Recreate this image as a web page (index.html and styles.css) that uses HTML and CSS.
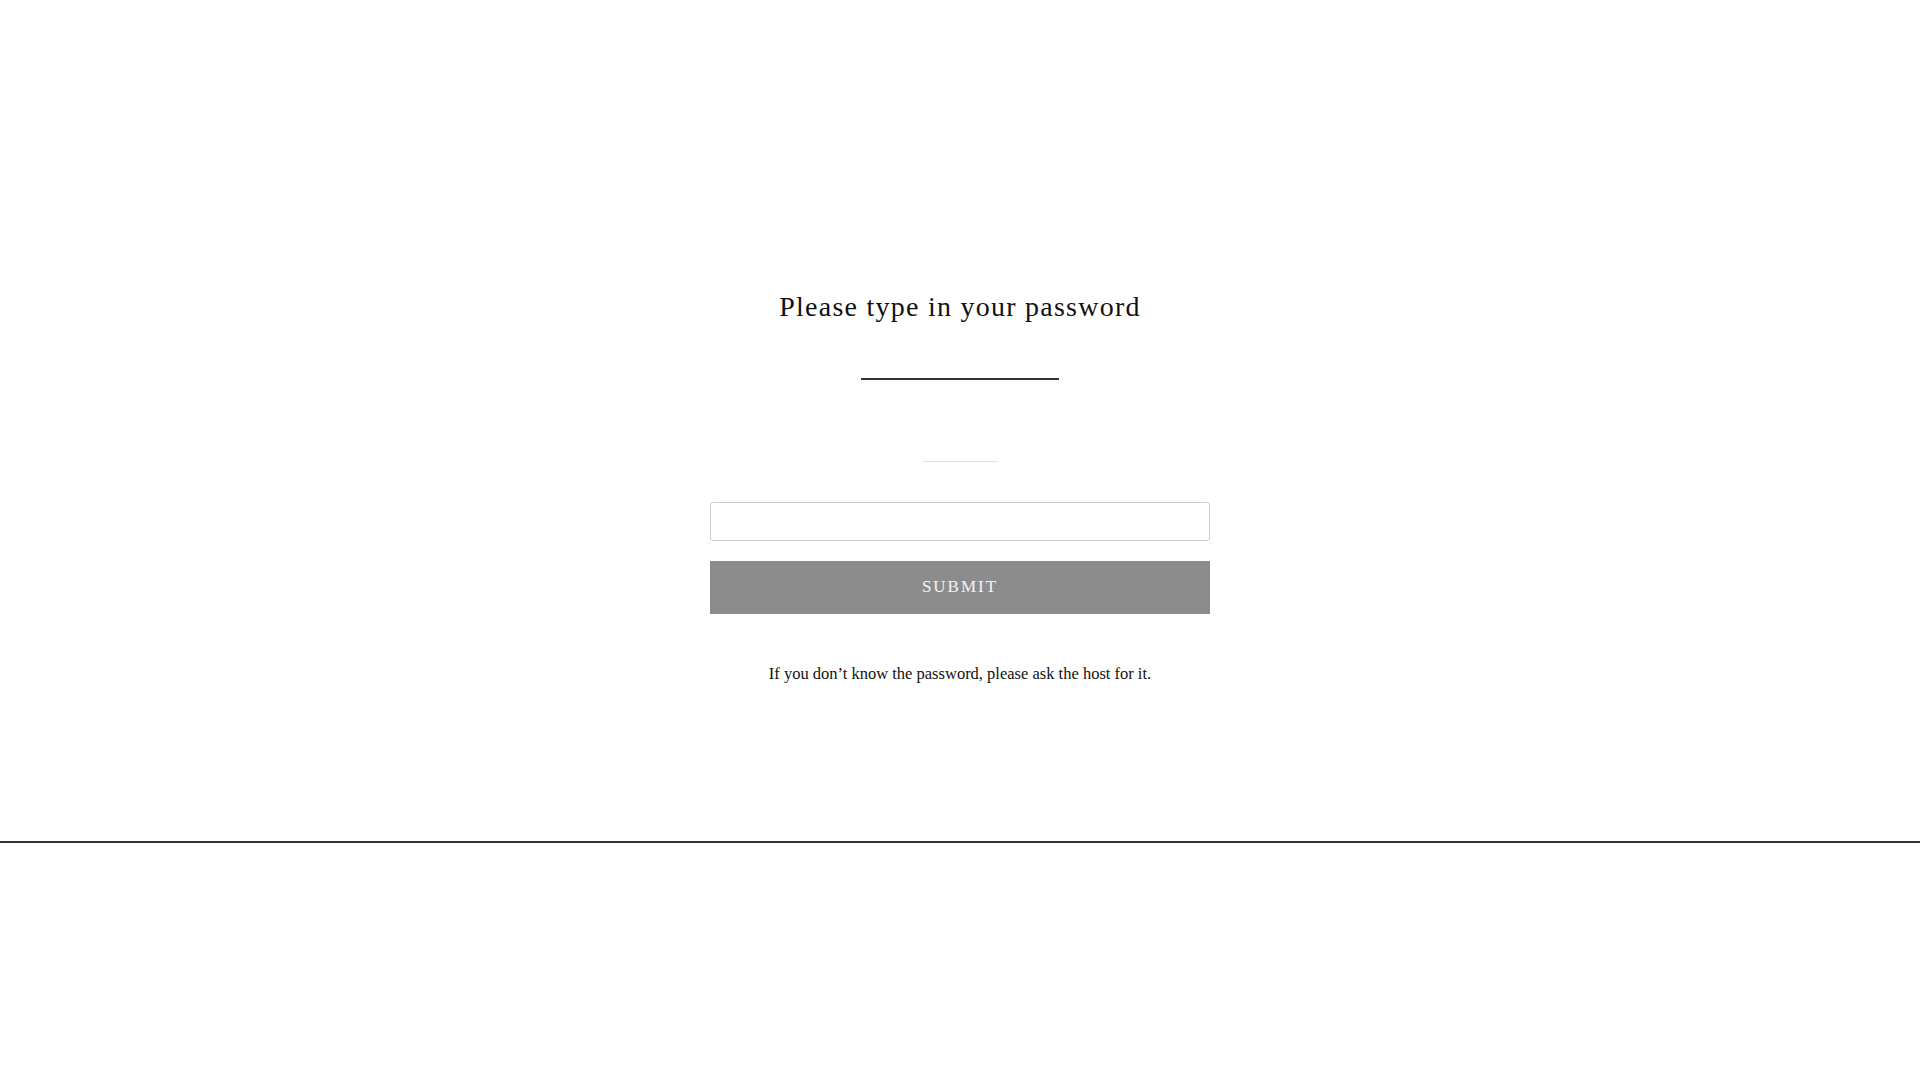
FILE: index.html
```html
<!DOCTYPE html>
<html lang="en">
<head>
<meta charset="utf-8">
<title>Password</title>
<link rel="stylesheet" href="styles.css">
</head>
<body>
<main class="page">
  <section class="password-box">
    <h1 class="title">Please type in your password</h1>
    <div class="divider"></div>
    <div class="thin-rule"></div>
    <form class="form" onsubmit="return false">
      <input class="field" type="password" aria-label="Password">
      <button class="submit" type="submit">SUBMIT</button>
    </form>
    <p class="help">If you don’t know the password, please ask the host for it.</p>
  </section>
  <div class="footer-rule"></div>
</main>
</body>
</html>
```

FILE: styles.css
```css
html, body {
  margin: 0;
  padding: 0;
  background: #ffffff;
}

body {
  font-family: "Liberation Serif", "Times New Roman", serif;
  color: #111111;
}

.page {
  display: flex;
  flex-direction: column;
}

.password-box {
  display: flex;
  flex-direction: column;
  align-items: center;
  padding-top: 290px;
}

.title {
  margin: 0;
  font-size: 28px;
  line-height: 34px;
  font-weight: 400;
  letter-spacing: 1.25px;
  color: #111111;
}

.divider {
  margin-top: 54px;
  width: 198px;
  height: 2px;
  background: #333333;
}

.thin-rule {
  margin-top: 81px;
  width: 75px;
  height: 1px;
  background: #e3e3e3;
}

.form {
  display: flex;
  flex-direction: column;
  gap: 20px;
  margin: 40px 0 0;
  width: 500px;
}

.field {
  box-sizing: border-box;
  width: 100%;
  height: 39px;
  margin: 0;
  padding: 0 10px;
  border: 1px solid #cccccc;
  border-radius: 3px;
  background: #ffffff;
  font: inherit;
  outline: none;
}

.submit {
  box-sizing: border-box;
  width: 100%;
  height: 53px;
  margin: 0;
  padding: 0 0 2px;
  border: none;
  border-radius: 0;
  background: #8c8c8c;
  color: #f4f4f4;
  font-family: "Liberation Serif", "Times New Roman", serif;
  font-size: 17px;
  letter-spacing: 2px;
  cursor: pointer;
}

.help {
  margin: 48px 0 0;
  font-size: 16.5px;
  line-height: 24px;
  color: #111111;
}

.footer-rule {
  margin-top: 155px;
  height: 2px;
  background: #333333;
}
```
